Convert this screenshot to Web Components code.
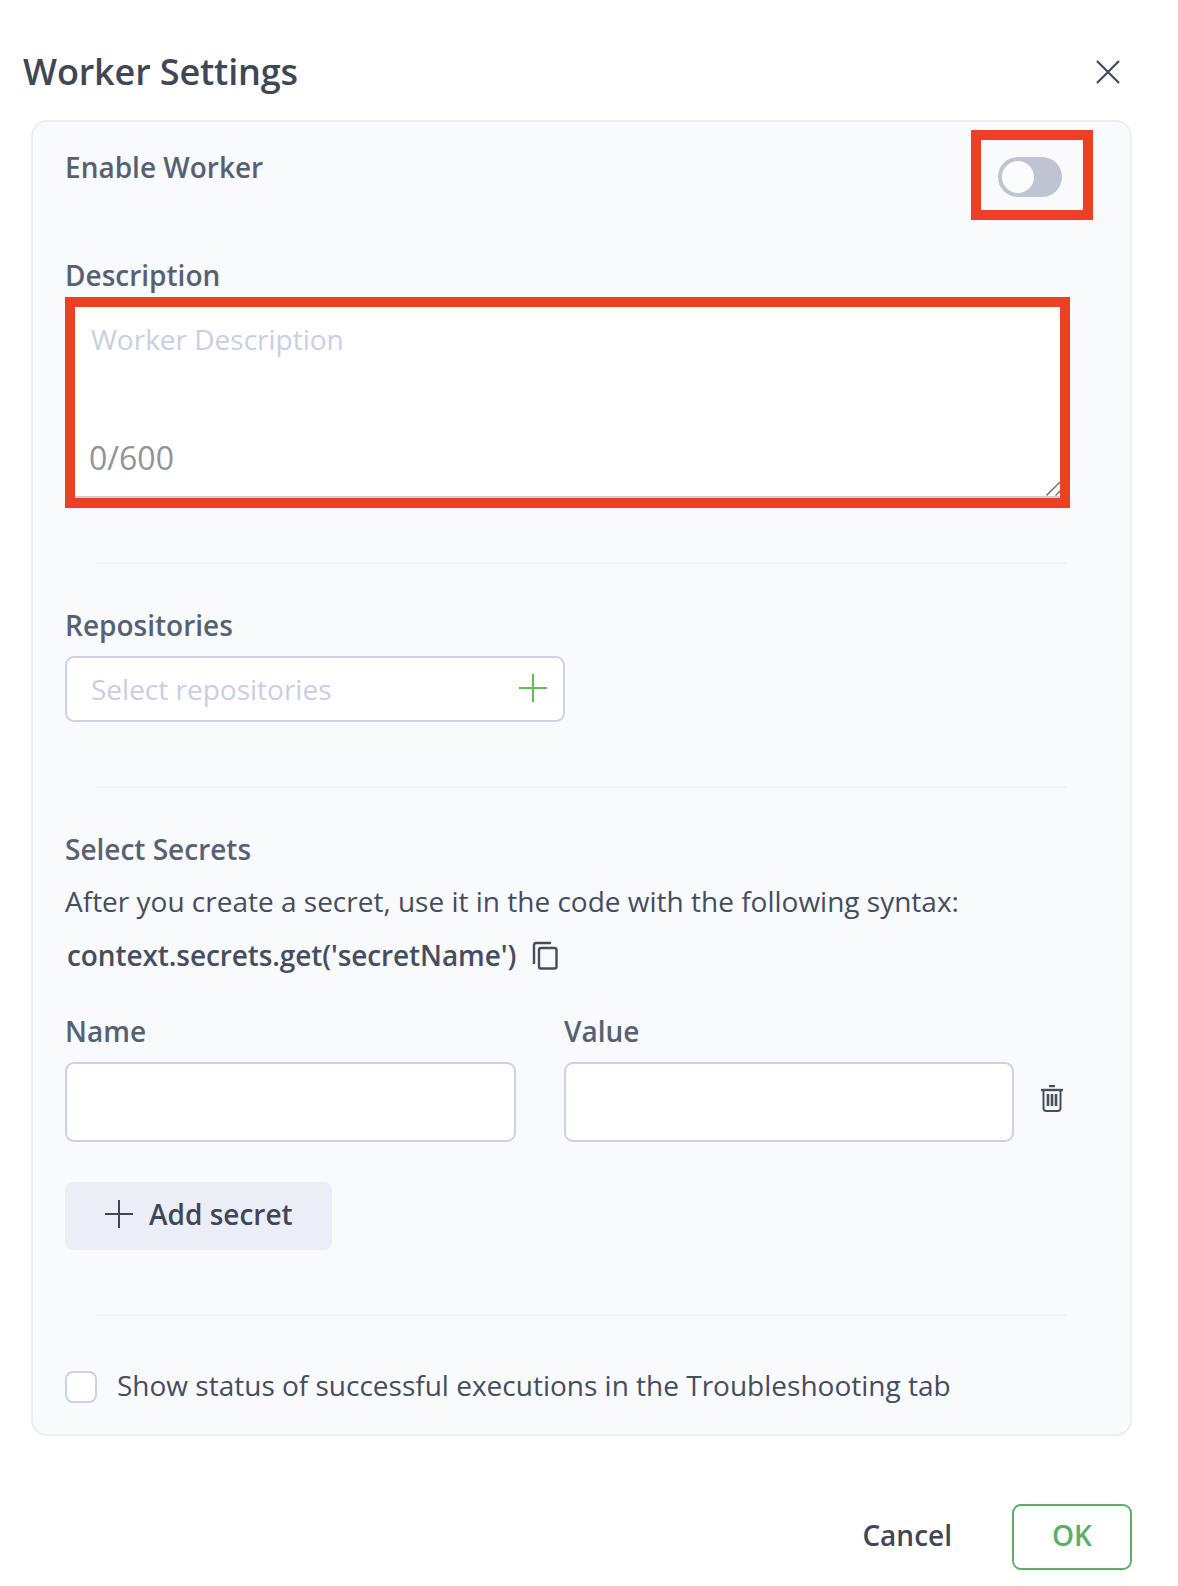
<!DOCTYPE html>
<html lang="en">
<head>
<meta charset="utf-8">
<title>Worker Settings</title>
<style>
html,body{margin:0;padding:0;background:#fff;}
body{font-family:"Open Sans","Noto Sans",sans-serif;}
</style>
</head>
<body>
<template id="t-dialog">
<style>
:host{display:block;width:1178px;height:1586px;box-sizing:border-box;padding:48px 46px 0 31px;background:#fff;color:#3f4757;overflow:hidden;}
.head{display:flex;align-items:center;justify-content:space-between;height:48px;margin-left:-8px;padding-right:12px;}
h1{margin:0;font-size:36px;line-height:48px;font-weight:600;letter-spacing:-0.15px;color:#3f4757;}
.foot{display:flex;justify-content:flex-end;align-items:center;gap:60px;margin-top:68px;}
svg{display:block;}
</style>
<div class="head"><h1><slot name="title"></slot></h1>
<svg width="24" height="24" viewBox="0 0 24 24" fill="none" stroke="#414a5b" stroke-width="2.2"><path d="M1 1L23 23M23 1L1 23"/></svg></div>
<slot></slot>
<div class="foot"><slot name="actions"></slot></div>
</template>

<template id="t-panel">
<style>
:host{display:block;margin-top:24px;box-sizing:border-box;height:1316px;border:2px solid #eceef6;border-radius:16px;background:#f9fafc;padding:8px 37px 0 32px;}
</style>
<slot></slot>
</template>

<template id="t-label">
<style>
:host{display:block;font-size:28px;line-height:38px;font-weight:600;color:#566274;}
</style>
<slot></slot>
</template>

<template id="t-toggle">
<style>
:host{display:block;box-sizing:border-box;width:122px;height:90px;border:10px solid #ec4025;padding:17px 0 0 17px;}
.track{width:64px;height:40px;border-radius:20px;background:#c0c3d2;position:relative;}
.knob{position:absolute;left:4px;top:4px;width:32px;height:32px;border-radius:50%;background:#fbfcfc;}
</style>
<div class="track"><div class="knob"></div></div>
</template>

<template id="t-area">
<style>
:host{display:block;box-sizing:border-box;width:1005px;height:211px;border:10px solid #ec4025;margin-top:3px;}
.box{box-sizing:border-box;width:985px;height:191px;background:#fff;border-bottom:2px solid #c8cfe4;padding:13px 16px 0 16px;display:flex;flex-direction:column;overflow:hidden;position:relative;}
.ph{font-size:28px;line-height:38px;color:#c9cfe2;}
.count{font-size:32px;line-height:40px;color:#929397;margin-top:80px;margin-left:-2px;}
svg{position:absolute;right:0;bottom:0;display:block;}
</style>
<div class="box"><div class="ph"><slot name="placeholder"></slot></div><div class="count"><slot name="count"></slot></div>
<svg width="14" height="14" viewBox="0 0 14 14" fill="none" stroke="#666a70" stroke-width="1.4"><path d="M0.5 13.5L14 0M9.5 13.5L14 9"/></svg></div>
</template>

<template id="t-select">
<style>
:host{display:flex;align-items:center;justify-content:space-between;box-sizing:border-box;width:500px;height:66px;border:2px solid #cbd2e6;border-radius:9px;background:#fff;padding:0 16px 0 24px;font-size:28px;color:#c9cfe2;}
svg{display:block;margin-top:-2px;}
</style>
<slot></slot>
<svg width="28" height="28" viewBox="0 0 28 28" fill="none" stroke="#66bb55" stroke-width="2"><path d="M14 0V28M0 14H28"/></svg>
</template>

<template id="t-divider">
<style>
:host{display:block;width:970px;height:2px;margin-left:31px;background:#f1f2f6;}
</style>
</template>

<template id="t-secret-row">
<style>
:host{display:grid;grid-template-columns:451px 450px auto;column-gap:48px;}
.icon{display:flex;align-items:center;box-sizing:border-box;margin-left:-21px;height:78px;padding-bottom:10px;align-self:end;}
svg{display:block;}
</style>
<slot></slot>
<div class="icon"><svg width="22" height="27" viewBox="0 0 22 27" fill="none" stroke="#454d5e" stroke-width="2"><path d="M8 1H14" stroke-width="2.4"/><path d="M0 5H22" stroke-width="2.4"/><path d="M2.5 5V23Q2.5 26 5.5 26H16.5Q19.5 26 19.5 23V5"/><path d="M7 9V21M11 9V21M15 9V21" stroke-width="2.6"/></svg></div>
</template>

<template id="t-field">
<style>
:host{display:block;}
.in{box-sizing:border-box;height:80px;margin-top:12px;border:2px solid #cbd2e6;border-radius:9px;background:#fff;}
</style>
<wd-label><slot></slot></wd-label>
<div class="in"></div>
</template>

<template id="t-add">
<style>
:host{display:flex;align-items:center;box-sizing:border-box;width:267px;height:68px;border-radius:8px;background:#ebeef6;padding:0 0 4px 40px;font-size:28px;font-weight:600;color:#3f4757;gap:16px;}
svg{display:block;}
</style>
<svg width="28" height="28" viewBox="0 0 28 28" fill="none" stroke="#3f4757" stroke-width="2"><path d="M14 0V28M0 14H28"/></svg>
<slot></slot>
</template>

<template id="t-check">
<style>
:host{display:flex;align-items:flex-start;gap:20px;height:38px;font-size:28px;line-height:38px;color:#454d5e;}
.b{box-sizing:border-box;width:32px;height:32px;margin-top:3px;border:2px solid #cbd2e6;border-radius:8px;background:#fff;flex:none;}
.t{display:block;margin-top:-2px;}
</style>
<div class="b"></div><span class="t"><slot></slot></span>
</template>

<template id="t-copy">
<style>
:host{display:flex;align-items:center;gap:16px;font-size:28px;line-height:38px;font-weight:600;color:#454d5e;margin-left:2px;letter-spacing:-0.1px;}
svg{display:block;}
</style>
<slot></slot>
<svg width="26" height="29" viewBox="0 0 26 29" fill="none" stroke="#454d5e" stroke-width="2.4"><path d="M2 23V4Q2 2 4 2H19"/><rect x="7" y="7" width="17.5" height="20.5" rx="2"/></svg>
</template>

<template id="t-btn">
<style>
:host{display:flex;align-items:center;justify-content:center;box-sizing:border-box;font-size:28px;font-weight:600;height:66px;padding-bottom:5px;color:#3f4757;}
:host([primary]){width:120px;border:2px solid #5fad6b;border-radius:9px;color:#5cad68;}
</style>
<slot></slot>
</template>

<worker-dialog>
  <span slot="title">Worker Settings</span>
  <wd-panel>
    <wd-row>
      <wd-label>Enable Worker</wd-label>
      <wd-toggle></wd-toggle>
    </wd-row>
    <wd-label style="margin-top:36px">Description</wd-label>
    <wd-area><span slot="placeholder">Worker Description</span><span slot="count">0/600</span></wd-area>
    <wd-divider style="margin-top:54px"></wd-divider>
    <wd-label style="margin-top:42px">Repositories</wd-label>
    <wd-select style="margin-top:12px">Select repositories</wd-select>
    <wd-divider style="margin-top:64px"></wd-divider>
    <wd-label style="margin-top:42px">Select Secrets</wd-label>
    <wd-text style="margin-top:14px">After you create a secret, use it in the code with the following syntax:</wd-text>
    <wd-copy style="margin-top:16px">context.secrets.get('secretName')</wd-copy>
    <wd-secret-row style="margin-top:38px">
      <wd-field>Name</wd-field>
      <wd-field>Value</wd-field>
    </wd-secret-row>
    <wd-add style="margin-top:40px">Add secret</wd-add>
    <wd-divider style="margin-top:64px"></wd-divider>
    <wd-check style="margin-top:52px">Show status of successful executions in the Troubleshooting tab</wd-check>
  </wd-panel>
  <wd-btn slot="actions">Cancel</wd-btn>
  <wd-btn slot="actions" primary>OK</wd-btn>
</worker-dialog>

<script>
function def(name,tpl,extraCss){
  customElements.define(name,class extends HTMLElement{
    constructor(){
      super();
      const r=this.attachShadow({mode:'open'});
      if(tpl){r.appendChild(document.getElementById(tpl).content.cloneNode(true));}
      if(extraCss){const s=document.createElement('style');s.textContent=extraCss;r.appendChild(s);const sl=document.createElement('slot');r.appendChild(sl);}
    }
  });
}
def('wd-label','t-label');
def('wd-toggle','t-toggle');
def('wd-area','t-area');
def('wd-select','t-select');
def('wd-divider','t-divider');
def('wd-field','t-field');
def('wd-secret-row','t-secret-row');
def('wd-add','t-add');
def('wd-check','t-check');
def('wd-copy','t-copy');
def('wd-btn','t-btn');
def('wd-panel','t-panel');
def('worker-dialog','t-dialog');
def('wd-row',null,':host{display:flex;justify-content:space-between;align-items:flex-start;}::slotted(wd-label){margin:18px 0 0 0;}');
def('wd-text',null,':host{display:block;font-size:28px;line-height:38px;color:#454d5e;}');
</script>
</body>
</html>
